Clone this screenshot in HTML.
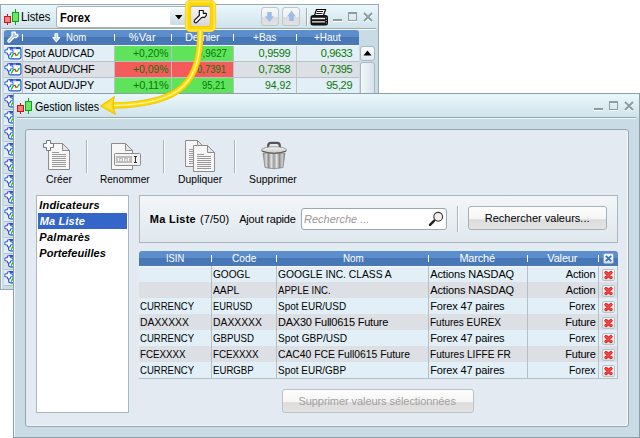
<!DOCTYPE html>
<html><head><meta charset="utf-8">
<style>
*{box-sizing:border-box;margin:0;padding:0}
html,body{width:640px;height:438px;overflow:hidden;background:#fff;font-family:"Liberation Sans",sans-serif;font-size:11px;color:#000}
.a{position:absolute}
.t{position:absolute;white-space:nowrap;line-height:13px}
svg{overflow:visible}
</style></head><body>

<div class="a" style="left:0px;top:4px;width:379px;height:286px;background:#c9dbe5;border:1px solid #9aa9b1;box-shadow:inset 1px 1px 0 #eef6f9"></div>
<div class="a" style="left:1px;top:5px;width:377px;height:24px;background:linear-gradient(#e9f8fc,#d0e1ea)"></div>
<div class="a" style="left:2px;top:28px;width:374px;height:1px;background:#9dabb2"></div>
<div class="a" style="left:2px;top:29px;width:374px;height:1px;background:#f4fafc"></div>
<svg class="a" style="left:4px;top:9px;" width="16" height="16" viewBox="0 0 16 16"><rect x="0.5" y="7.5" width="6" height="6" fill="#f58080" stroke="#c81414"/><line x1="3.5" y1="5" x2="3.5" y2="7" stroke="#c81414"/><line x1="3.5" y1="14" x2="3.5" y2="16" stroke="#c81414"/><rect x="8.5" y="3.5" width="6" height="9" fill="#68e868" stroke="#12a01a"/><line x1="11.5" y1="0" x2="11.5" y2="3" stroke="#12a01a"/><line x1="11.5" y1="13" x2="11.5" y2="16" stroke="#12a01a"/></svg>
<div class="t" style="left:21.00px;top:11px;font-size:12px;transform:scaleX(0.9355);transform-origin:0 0;">Listes</div>
<div class="a" style="left:56px;top:6px;width:131px;height:22px;background:#fff;border:1px solid #a5b3ba;border-radius:3px"></div>
<div class="a" style="left:170px;top:9px;width:16px;height:16px;background:linear-gradient(#f0f7fa,#cadbe4);border-radius:2px"></div>
<svg class="a" style="left:175px;top:15px;" width="8" height="5" viewBox="0 0 8 5"><path d="M0 0 H7.5 L3.75 4.5 Z" fill="#000"/></svg>
<div class="t" style="left:59.50px;top:12px;font-size:12px;transform:scaleX(0.9242);transform-origin:0 0;font-weight:bold">Forex</div>
<div class="a" style="left:190px;top:6px;width:21px;height:21px;background:linear-gradient(#f6f6f6,#d6d6d6);border:1px solid #9db3c6;border-radius:2px"></div>
<svg class="a" style="left:191px;top:6px;" width="20" height="20" viewBox="0 0 20 20"><path d="M8.3 4.5 H12.3 V7.3 H15.3 L15.4 9.3 L13.6 11.3 H10.8 L5.8 16.3 Q4.6 17.3 3.6 16.3 Q2.7 15.2 3.6 14.2 L8.3 9.5 Z" fill="#fff" stroke="#111" stroke-width="1.15" stroke-linejoin="round"/></svg>
<div class="a" style="left:261px;top:7px;width:18px;height:19px;background:linear-gradient(#f7f7f7 0,#efefef 55%,#dcdcdc 56%,#e2e2e2 100%);border:1px solid #bcc6cc;border-radius:3px"></div>
<svg class="a" style="left:264px;top:11px;" width="11" height="12" viewBox="0 0 11 12"><path d="M5.5 11 L10 5.3 H7.8 V1 H3.2 V5.3 H1 Z" fill="#9dbce9"/></svg>
<div class="a" style="left:282px;top:7px;width:18px;height:19px;background:linear-gradient(#f7f7f7 0,#efefef 55%,#dcdcdc 56%,#e2e2e2 100%);border:1px solid #bcc6cc;border-radius:3px"></div>
<svg class="a" style="left:286px;top:10px;" width="11" height="12" viewBox="0 0 11 12"><path d="M5.5 0.8 L10 6.5 H7.8 V11 H3.2 V6.5 H1 Z" fill="#9dbce9"/></svg>
<div class="a" style="left:306px;top:8px;width:1px;height:18px;background:#9eabb2;box-shadow:1px 0 0 #fff"></div>
<svg class="a" style="left:310px;top:8px;" width="19" height="18" viewBox="0 0 19 18"><path d="M6.5 1.5 H15.5 L13.5 7.5 H4.5 Z" fill="#fff" stroke="#000" stroke-width="1.2"/><path d="M7 3.5 H13 M6.3 5.5 H12.5" stroke="#000" stroke-width="0.9"/><rect x="0.5" y="7" width="17.5" height="10.5" rx="2.5" fill="#111"/><path d="M2 10.5 H15 M2 13.8 H15" stroke="#eee" stroke-width="1.3"/><path d="M16.3 9.5 V10.5 M16.3 12 V13 M16.3 14.5 V15.5" stroke="#ccc" stroke-width="1"/></svg>
<div class="a" style="left:333px;top:19px;width:9px;height:2px;background:#8d9ca4;box-shadow:0 1px 0 #fff"></div>
<div class="a" style="left:348px;top:12px;width:9px;height:9px;border:1px solid #8d9ca4;border-top-width:2px;box-shadow:0 1px 0 #fff"></div>
<svg class="a" style="left:363px;top:12px;" width="10" height="10" viewBox="0 0 10 10"><path d="M1 1 L9 9 M9 1 L1 9" stroke="#fff" stroke-width="2" transform="translate(0,1)"/><path d="M1 1 L9 9 M9 1 L1 9" stroke="#8d9ca4" stroke-width="2"/></svg>
<div class="a" style="left:4px;top:30px;width:355px;height:15px;border-radius:3px 3px 0 0;background:linear-gradient(#5e8fcd 0,#5a8ccb 50%,#4676b5 50%,#4a79b6 100%)"></div>
<div class="a" style="left:22px;top:34px;width:1px;height:7px;background:#fff"></div>
<div class="a" style="left:114px;top:34px;width:1px;height:7px;background:#fff"></div>
<div class="a" style="left:171px;top:34px;width:1px;height:7px;background:#fff"></div>
<div class="a" style="left:233px;top:34px;width:1px;height:7px;background:#fff"></div>
<div class="a" style="left:296px;top:34px;width:1px;height:7px;background:#fff"></div>
<svg class="a" style="left:4px;top:29px;" width="16" height="16" viewBox="0 0 16 16"><g transform="translate(1.2,-0.6) scale(0.82)"><path d="M8.3 4.5 H12.3 V7.3 H15.3 L15.4 9.3 L13.6 11.3 H10.8 L5.8 16.3 Q4.6 17.3 3.6 16.3 Q2.7 15.2 3.6 14.2 L8.3 9.5 Z" fill="#a9c2e6" stroke="#fff" stroke-width="1.5" stroke-linejoin="round"/></g></svg>
<svg class="a" style="left:52px;top:33px;" width="9" height="10" viewBox="0 0 9 10"><path d="M3 0.7 H5.6 V4.6 H7.8 L4.3 8.6 L0.8 4.6 H3 Z" fill="#c3d6ee" stroke="#fff" stroke-width="1.1" stroke-linejoin="round"/></svg>
<div class="t" style="left:66.00px;top:31px;font-size:11px;transform:scaleX(0.8696);transform-origin:0 0;color:#fff">Nom</div>
<div class="t" style="left:128.80px;top:31px;font-size:11px;letter-spacing:0.233px;color:#fff">%Var</div>
<div class="t" style="left:185.00px;top:31px;font-size:11px;letter-spacing:-0.250px;color:#fff">Dernier</div>
<div class="t" style="left:253.00px;top:31px;font-size:11px;transform:scaleX(0.9231);transform-origin:0 0;color:#fff">+Bas</div>
<div class="t" style="left:314.00px;top:31px;font-size:11px;transform:scaleX(0.9000);transform-origin:0 0;color:#fff">+Haut</div>
<div class="a" style="left:4px;top:45px;width:355px;height:1px;background:#f4f8fb"></div>
<div class="a" style="left:4px;top:46px;width:355px;height:15px;background:#e2eff7"></div>
<div class="a" style="left:4px;top:61px;width:355px;height:1px;background:#b9c0c8"></div>
<div class="a" style="left:22px;top:46px;width:1px;height:15px;background:#b9c0c8"></div>
<div class="a" style="left:114px;top:46px;width:1px;height:15px;background:#b9c0c8"></div>
<div class="a" style="left:171px;top:46px;width:1px;height:15px;background:#b9c0c8"></div>
<div class="a" style="left:233px;top:46px;width:1px;height:15px;background:#b9c0c8"></div>
<div class="a" style="left:296px;top:46px;width:1px;height:15px;background:#b9c0c8"></div>
<svg class="a" style="left:4px;top:46px;" width="18" height="14" viewBox="0 0 18 14"><rect x="4.6" y="1.6" width="12.3" height="11.3" rx="1.8" fill="#fff" stroke="#2456d6" stroke-width="1.2"/><path d="M5.2 2.2 H16.5" stroke="#2456d6" stroke-width="2"/><path d="M9 2.2 H12" stroke="#9fb8ee" stroke-width="1"/><path d="M7 11.6 L10.3 6.6" fill="none" stroke="#18c018" stroke-width="1.3"/><path d="M10.6 6.8 L12.4 9.8" fill="none" stroke="#e81818" stroke-width="1.3"/><path d="M12.6 9.8 L15.6 5.8" fill="none" stroke="#18c018" stroke-width="1.3"/><path d="M3.4 1.9 H6.4 V3.9 H8.9 V6.9 H6.4 V8.9 H3.4 V6.9 H0.9 V3.9 H3.4 Z" fill="#fff" stroke="#2456d6" stroke-width="0.95" stroke-linejoin="round"/></svg>
<div class="a" style="left:115px;top:46px;width:56px;height:15px;background:#5ee35b"></div>
<div class="a" style="left:172px;top:46px;width:61px;height:15px;background:#5ee35b"></div>
<div class="t" style="left:24.00px;top:47px;font-size:11px;transform:scaleX(0.9427);transform-origin:0 0;">Spot AUD/CAD</div>
<div class="t" style="left:133.10px;top:47px;font-size:11px;transform:scaleX(0.9421);transform-origin:0 0;color:#087808">+0,20%</div>
<div class="t" style="left:196.60px;top:47px;font-size:11px;transform:scaleX(0.8941);transform-origin:0 0;color:#087808">0,9627</div>
<div class="t" style="left:258.60px;top:47px;font-size:11px;letter-spacing:-0.320px;color:#087808">0,9599</div>
<div class="t" style="left:320.70px;top:47px;font-size:11px;letter-spacing:-0.340px;color:#087808">0,9633</div>
<div class="a" style="left:4px;top:62px;width:355px;height:15px;background:#dcdfe4"></div>
<div class="a" style="left:4px;top:77px;width:355px;height:1px;background:#b9c0c8"></div>
<div class="a" style="left:22px;top:62px;width:1px;height:15px;background:#b9c0c8"></div>
<div class="a" style="left:114px;top:62px;width:1px;height:15px;background:#b9c0c8"></div>
<div class="a" style="left:171px;top:62px;width:1px;height:15px;background:#b9c0c8"></div>
<div class="a" style="left:233px;top:62px;width:1px;height:15px;background:#b9c0c8"></div>
<div class="a" style="left:296px;top:62px;width:1px;height:15px;background:#b9c0c8"></div>
<svg class="a" style="left:4px;top:62px;" width="18" height="14" viewBox="0 0 18 14"><rect x="4.6" y="1.6" width="12.3" height="11.3" rx="1.8" fill="#fff" stroke="#2456d6" stroke-width="1.2"/><path d="M5.2 2.2 H16.5" stroke="#2456d6" stroke-width="2"/><path d="M9 2.2 H12" stroke="#9fb8ee" stroke-width="1"/><path d="M7 11.6 L10.3 6.6" fill="none" stroke="#18c018" stroke-width="1.3"/><path d="M10.6 6.8 L12.4 9.8" fill="none" stroke="#e81818" stroke-width="1.3"/><path d="M12.6 9.8 L15.6 5.8" fill="none" stroke="#18c018" stroke-width="1.3"/><path d="M3.4 1.9 H6.4 V3.9 H8.9 V6.9 H6.4 V8.9 H3.4 V6.9 H0.9 V3.9 H3.4 Z" fill="#fff" stroke="#2456d6" stroke-width="0.95" stroke-linejoin="round"/></svg>
<div class="a" style="left:115px;top:62px;width:56px;height:15px;background:#f65b5b"></div>
<div class="a" style="left:172px;top:62px;width:61px;height:15px;background:#f65b5b"></div>
<div class="t" style="left:24.00px;top:63px;font-size:11px;letter-spacing:-0.300px;">Spot AUD/CHF</div>
<div class="t" style="left:133.00px;top:63px;font-size:11px;transform:scaleX(0.9447);transform-origin:0 0;color:#087808">+0,09%</div>
<div class="t" style="left:196.60px;top:63px;font-size:11px;transform:scaleX(0.8588);transform-origin:0 0;color:#087808">0,7391</div>
<div class="t" style="left:258.60px;top:63px;font-size:11px;letter-spacing:-0.320px;color:#087808">0,7358</div>
<div class="t" style="left:320.60px;top:63px;font-size:11px;letter-spacing:-0.320px;color:#087808">0,7395</div>
<div class="a" style="left:4px;top:78px;width:355px;height:15px;background:#e2eff7"></div>
<div class="a" style="left:4px;top:93px;width:355px;height:1px;background:#b9c0c8"></div>
<div class="a" style="left:22px;top:78px;width:1px;height:15px;background:#b9c0c8"></div>
<div class="a" style="left:114px;top:78px;width:1px;height:15px;background:#b9c0c8"></div>
<div class="a" style="left:171px;top:78px;width:1px;height:15px;background:#b9c0c8"></div>
<div class="a" style="left:233px;top:78px;width:1px;height:15px;background:#b9c0c8"></div>
<div class="a" style="left:296px;top:78px;width:1px;height:15px;background:#b9c0c8"></div>
<svg class="a" style="left:4px;top:78px;" width="18" height="14" viewBox="0 0 18 14"><rect x="4.6" y="1.6" width="12.3" height="11.3" rx="1.8" fill="#fff" stroke="#2456d6" stroke-width="1.2"/><path d="M5.2 2.2 H16.5" stroke="#2456d6" stroke-width="2"/><path d="M9 2.2 H12" stroke="#9fb8ee" stroke-width="1"/><path d="M7 11.6 L10.3 6.6" fill="none" stroke="#18c018" stroke-width="1.3"/><path d="M10.6 6.8 L12.4 9.8" fill="none" stroke="#e81818" stroke-width="1.3"/><path d="M12.6 9.8 L15.6 5.8" fill="none" stroke="#18c018" stroke-width="1.3"/><path d="M3.4 1.9 H6.4 V3.9 H8.9 V6.9 H6.4 V8.9 H3.4 V6.9 H0.9 V3.9 H3.4 Z" fill="#fff" stroke="#2456d6" stroke-width="0.95" stroke-linejoin="round"/></svg>
<div class="a" style="left:115px;top:78px;width:56px;height:15px;background:#5ee35b"></div>
<div class="a" style="left:172px;top:78px;width:61px;height:15px;background:#5ee35b"></div>
<div class="t" style="left:24.00px;top:79px;font-size:11px;letter-spacing:-0.118px;">Spot AUD/JPY</div>
<div class="t" style="left:133.00px;top:79px;font-size:11px;letter-spacing:-0.220px;color:#087808">+0,11%</div>
<div class="t" style="left:202.00px;top:79px;font-size:11px;transform:scaleX(0.8571);transform-origin:0 0;color:#087808">95,21</div>
<div class="t" style="left:264.50px;top:79px;font-size:11px;transform:scaleX(0.9464);transform-origin:0 0;color:#087808">94,92</div>
<div class="t" style="left:326.30px;top:79px;font-size:11px;letter-spacing:-0.325px;color:#087808">95,29</div>
<div class="a" style="left:4px;top:94px;width:355px;height:15px;background:#dcdfe4"></div>
<div class="a" style="left:4px;top:109px;width:355px;height:1px;background:#b9c0c8"></div>
<div class="a" style="left:22px;top:94px;width:1px;height:15px;background:#b9c0c8"></div>
<div class="a" style="left:114px;top:94px;width:1px;height:15px;background:#b9c0c8"></div>
<div class="a" style="left:171px;top:94px;width:1px;height:15px;background:#b9c0c8"></div>
<div class="a" style="left:233px;top:94px;width:1px;height:15px;background:#b9c0c8"></div>
<div class="a" style="left:296px;top:94px;width:1px;height:15px;background:#b9c0c8"></div>
<svg class="a" style="left:4px;top:94px;" width="18" height="14" viewBox="0 0 18 14"><rect x="4.6" y="1.6" width="12.3" height="11.3" rx="1.8" fill="#fff" stroke="#2456d6" stroke-width="1.2"/><path d="M5.2 2.2 H16.5" stroke="#2456d6" stroke-width="2"/><path d="M9 2.2 H12" stroke="#9fb8ee" stroke-width="1"/><path d="M7 11.6 L10.3 6.6" fill="none" stroke="#18c018" stroke-width="1.3"/><path d="M10.6 6.8 L12.4 9.8" fill="none" stroke="#e81818" stroke-width="1.3"/><path d="M12.6 9.8 L15.6 5.8" fill="none" stroke="#18c018" stroke-width="1.3"/><path d="M3.4 1.9 H6.4 V3.9 H8.9 V6.9 H6.4 V8.9 H3.4 V6.9 H0.9 V3.9 H3.4 Z" fill="#fff" stroke="#2456d6" stroke-width="0.95" stroke-linejoin="round"/></svg>
<div class="a" style="left:4px;top:110px;width:355px;height:15px;background:#e2eff7"></div>
<div class="a" style="left:4px;top:125px;width:355px;height:1px;background:#b9c0c8"></div>
<div class="a" style="left:22px;top:110px;width:1px;height:15px;background:#b9c0c8"></div>
<div class="a" style="left:114px;top:110px;width:1px;height:15px;background:#b9c0c8"></div>
<div class="a" style="left:171px;top:110px;width:1px;height:15px;background:#b9c0c8"></div>
<div class="a" style="left:233px;top:110px;width:1px;height:15px;background:#b9c0c8"></div>
<div class="a" style="left:296px;top:110px;width:1px;height:15px;background:#b9c0c8"></div>
<svg class="a" style="left:4px;top:110px;" width="18" height="14" viewBox="0 0 18 14"><rect x="4.6" y="1.6" width="12.3" height="11.3" rx="1.8" fill="#fff" stroke="#2456d6" stroke-width="1.2"/><path d="M5.2 2.2 H16.5" stroke="#2456d6" stroke-width="2"/><path d="M9 2.2 H12" stroke="#9fb8ee" stroke-width="1"/><path d="M7 11.6 L10.3 6.6" fill="none" stroke="#18c018" stroke-width="1.3"/><path d="M10.6 6.8 L12.4 9.8" fill="none" stroke="#e81818" stroke-width="1.3"/><path d="M12.6 9.8 L15.6 5.8" fill="none" stroke="#18c018" stroke-width="1.3"/><path d="M3.4 1.9 H6.4 V3.9 H8.9 V6.9 H6.4 V8.9 H3.4 V6.9 H0.9 V3.9 H3.4 Z" fill="#fff" stroke="#2456d6" stroke-width="0.95" stroke-linejoin="round"/></svg>
<div class="a" style="left:4px;top:126px;width:355px;height:15px;background:#dcdfe4"></div>
<div class="a" style="left:4px;top:141px;width:355px;height:1px;background:#b9c0c8"></div>
<div class="a" style="left:22px;top:126px;width:1px;height:15px;background:#b9c0c8"></div>
<div class="a" style="left:114px;top:126px;width:1px;height:15px;background:#b9c0c8"></div>
<div class="a" style="left:171px;top:126px;width:1px;height:15px;background:#b9c0c8"></div>
<div class="a" style="left:233px;top:126px;width:1px;height:15px;background:#b9c0c8"></div>
<div class="a" style="left:296px;top:126px;width:1px;height:15px;background:#b9c0c8"></div>
<svg class="a" style="left:4px;top:126px;" width="18" height="14" viewBox="0 0 18 14"><rect x="4.6" y="1.6" width="12.3" height="11.3" rx="1.8" fill="#fff" stroke="#2456d6" stroke-width="1.2"/><path d="M5.2 2.2 H16.5" stroke="#2456d6" stroke-width="2"/><path d="M9 2.2 H12" stroke="#9fb8ee" stroke-width="1"/><path d="M7 11.6 L10.3 6.6" fill="none" stroke="#18c018" stroke-width="1.3"/><path d="M10.6 6.8 L12.4 9.8" fill="none" stroke="#e81818" stroke-width="1.3"/><path d="M12.6 9.8 L15.6 5.8" fill="none" stroke="#18c018" stroke-width="1.3"/><path d="M3.4 1.9 H6.4 V3.9 H8.9 V6.9 H6.4 V8.9 H3.4 V6.9 H0.9 V3.9 H3.4 Z" fill="#fff" stroke="#2456d6" stroke-width="0.95" stroke-linejoin="round"/></svg>
<div class="a" style="left:4px;top:142px;width:355px;height:15px;background:#e2eff7"></div>
<div class="a" style="left:4px;top:157px;width:355px;height:1px;background:#b9c0c8"></div>
<div class="a" style="left:22px;top:142px;width:1px;height:15px;background:#b9c0c8"></div>
<div class="a" style="left:114px;top:142px;width:1px;height:15px;background:#b9c0c8"></div>
<div class="a" style="left:171px;top:142px;width:1px;height:15px;background:#b9c0c8"></div>
<div class="a" style="left:233px;top:142px;width:1px;height:15px;background:#b9c0c8"></div>
<div class="a" style="left:296px;top:142px;width:1px;height:15px;background:#b9c0c8"></div>
<svg class="a" style="left:4px;top:142px;" width="18" height="14" viewBox="0 0 18 14"><rect x="4.6" y="1.6" width="12.3" height="11.3" rx="1.8" fill="#fff" stroke="#2456d6" stroke-width="1.2"/><path d="M5.2 2.2 H16.5" stroke="#2456d6" stroke-width="2"/><path d="M9 2.2 H12" stroke="#9fb8ee" stroke-width="1"/><path d="M7 11.6 L10.3 6.6" fill="none" stroke="#18c018" stroke-width="1.3"/><path d="M10.6 6.8 L12.4 9.8" fill="none" stroke="#e81818" stroke-width="1.3"/><path d="M12.6 9.8 L15.6 5.8" fill="none" stroke="#18c018" stroke-width="1.3"/><path d="M3.4 1.9 H6.4 V3.9 H8.9 V6.9 H6.4 V8.9 H3.4 V6.9 H0.9 V3.9 H3.4 Z" fill="#fff" stroke="#2456d6" stroke-width="0.95" stroke-linejoin="round"/></svg>
<div class="a" style="left:4px;top:158px;width:355px;height:15px;background:#dcdfe4"></div>
<div class="a" style="left:4px;top:173px;width:355px;height:1px;background:#b9c0c8"></div>
<div class="a" style="left:22px;top:158px;width:1px;height:15px;background:#b9c0c8"></div>
<div class="a" style="left:114px;top:158px;width:1px;height:15px;background:#b9c0c8"></div>
<div class="a" style="left:171px;top:158px;width:1px;height:15px;background:#b9c0c8"></div>
<div class="a" style="left:233px;top:158px;width:1px;height:15px;background:#b9c0c8"></div>
<div class="a" style="left:296px;top:158px;width:1px;height:15px;background:#b9c0c8"></div>
<svg class="a" style="left:4px;top:158px;" width="18" height="14" viewBox="0 0 18 14"><rect x="4.6" y="1.6" width="12.3" height="11.3" rx="1.8" fill="#fff" stroke="#2456d6" stroke-width="1.2"/><path d="M5.2 2.2 H16.5" stroke="#2456d6" stroke-width="2"/><path d="M9 2.2 H12" stroke="#9fb8ee" stroke-width="1"/><path d="M7 11.6 L10.3 6.6" fill="none" stroke="#18c018" stroke-width="1.3"/><path d="M10.6 6.8 L12.4 9.8" fill="none" stroke="#e81818" stroke-width="1.3"/><path d="M12.6 9.8 L15.6 5.8" fill="none" stroke="#18c018" stroke-width="1.3"/><path d="M3.4 1.9 H6.4 V3.9 H8.9 V6.9 H6.4 V8.9 H3.4 V6.9 H0.9 V3.9 H3.4 Z" fill="#fff" stroke="#2456d6" stroke-width="0.95" stroke-linejoin="round"/></svg>
<div class="a" style="left:4px;top:174px;width:355px;height:15px;background:#e2eff7"></div>
<div class="a" style="left:4px;top:189px;width:355px;height:1px;background:#b9c0c8"></div>
<div class="a" style="left:22px;top:174px;width:1px;height:15px;background:#b9c0c8"></div>
<div class="a" style="left:114px;top:174px;width:1px;height:15px;background:#b9c0c8"></div>
<div class="a" style="left:171px;top:174px;width:1px;height:15px;background:#b9c0c8"></div>
<div class="a" style="left:233px;top:174px;width:1px;height:15px;background:#b9c0c8"></div>
<div class="a" style="left:296px;top:174px;width:1px;height:15px;background:#b9c0c8"></div>
<svg class="a" style="left:4px;top:174px;" width="18" height="14" viewBox="0 0 18 14"><rect x="4.6" y="1.6" width="12.3" height="11.3" rx="1.8" fill="#fff" stroke="#2456d6" stroke-width="1.2"/><path d="M5.2 2.2 H16.5" stroke="#2456d6" stroke-width="2"/><path d="M9 2.2 H12" stroke="#9fb8ee" stroke-width="1"/><path d="M7 11.6 L10.3 6.6" fill="none" stroke="#18c018" stroke-width="1.3"/><path d="M10.6 6.8 L12.4 9.8" fill="none" stroke="#e81818" stroke-width="1.3"/><path d="M12.6 9.8 L15.6 5.8" fill="none" stroke="#18c018" stroke-width="1.3"/><path d="M3.4 1.9 H6.4 V3.9 H8.9 V6.9 H6.4 V8.9 H3.4 V6.9 H0.9 V3.9 H3.4 Z" fill="#fff" stroke="#2456d6" stroke-width="0.95" stroke-linejoin="round"/></svg>
<div class="a" style="left:4px;top:190px;width:355px;height:15px;background:#dcdfe4"></div>
<div class="a" style="left:4px;top:205px;width:355px;height:1px;background:#b9c0c8"></div>
<div class="a" style="left:22px;top:190px;width:1px;height:15px;background:#b9c0c8"></div>
<div class="a" style="left:114px;top:190px;width:1px;height:15px;background:#b9c0c8"></div>
<div class="a" style="left:171px;top:190px;width:1px;height:15px;background:#b9c0c8"></div>
<div class="a" style="left:233px;top:190px;width:1px;height:15px;background:#b9c0c8"></div>
<div class="a" style="left:296px;top:190px;width:1px;height:15px;background:#b9c0c8"></div>
<svg class="a" style="left:4px;top:190px;" width="18" height="14" viewBox="0 0 18 14"><rect x="4.6" y="1.6" width="12.3" height="11.3" rx="1.8" fill="#fff" stroke="#2456d6" stroke-width="1.2"/><path d="M5.2 2.2 H16.5" stroke="#2456d6" stroke-width="2"/><path d="M9 2.2 H12" stroke="#9fb8ee" stroke-width="1"/><path d="M7 11.6 L10.3 6.6" fill="none" stroke="#18c018" stroke-width="1.3"/><path d="M10.6 6.8 L12.4 9.8" fill="none" stroke="#e81818" stroke-width="1.3"/><path d="M12.6 9.8 L15.6 5.8" fill="none" stroke="#18c018" stroke-width="1.3"/><path d="M3.4 1.9 H6.4 V3.9 H8.9 V6.9 H6.4 V8.9 H3.4 V6.9 H0.9 V3.9 H3.4 Z" fill="#fff" stroke="#2456d6" stroke-width="0.95" stroke-linejoin="round"/></svg>
<div class="a" style="left:4px;top:206px;width:355px;height:15px;background:#e2eff7"></div>
<div class="a" style="left:4px;top:221px;width:355px;height:1px;background:#b9c0c8"></div>
<div class="a" style="left:22px;top:206px;width:1px;height:15px;background:#b9c0c8"></div>
<div class="a" style="left:114px;top:206px;width:1px;height:15px;background:#b9c0c8"></div>
<div class="a" style="left:171px;top:206px;width:1px;height:15px;background:#b9c0c8"></div>
<div class="a" style="left:233px;top:206px;width:1px;height:15px;background:#b9c0c8"></div>
<div class="a" style="left:296px;top:206px;width:1px;height:15px;background:#b9c0c8"></div>
<svg class="a" style="left:4px;top:206px;" width="18" height="14" viewBox="0 0 18 14"><rect x="4.6" y="1.6" width="12.3" height="11.3" rx="1.8" fill="#fff" stroke="#2456d6" stroke-width="1.2"/><path d="M5.2 2.2 H16.5" stroke="#2456d6" stroke-width="2"/><path d="M9 2.2 H12" stroke="#9fb8ee" stroke-width="1"/><path d="M7 11.6 L10.3 6.6" fill="none" stroke="#18c018" stroke-width="1.3"/><path d="M10.6 6.8 L12.4 9.8" fill="none" stroke="#e81818" stroke-width="1.3"/><path d="M12.6 9.8 L15.6 5.8" fill="none" stroke="#18c018" stroke-width="1.3"/><path d="M3.4 1.9 H6.4 V3.9 H8.9 V6.9 H6.4 V8.9 H3.4 V6.9 H0.9 V3.9 H3.4 Z" fill="#fff" stroke="#2456d6" stroke-width="0.95" stroke-linejoin="round"/></svg>
<div class="a" style="left:4px;top:222px;width:355px;height:15px;background:#dcdfe4"></div>
<div class="a" style="left:4px;top:237px;width:355px;height:1px;background:#b9c0c8"></div>
<div class="a" style="left:22px;top:222px;width:1px;height:15px;background:#b9c0c8"></div>
<div class="a" style="left:114px;top:222px;width:1px;height:15px;background:#b9c0c8"></div>
<div class="a" style="left:171px;top:222px;width:1px;height:15px;background:#b9c0c8"></div>
<div class="a" style="left:233px;top:222px;width:1px;height:15px;background:#b9c0c8"></div>
<div class="a" style="left:296px;top:222px;width:1px;height:15px;background:#b9c0c8"></div>
<svg class="a" style="left:4px;top:222px;" width="18" height="14" viewBox="0 0 18 14"><rect x="4.6" y="1.6" width="12.3" height="11.3" rx="1.8" fill="#fff" stroke="#2456d6" stroke-width="1.2"/><path d="M5.2 2.2 H16.5" stroke="#2456d6" stroke-width="2"/><path d="M9 2.2 H12" stroke="#9fb8ee" stroke-width="1"/><path d="M7 11.6 L10.3 6.6" fill="none" stroke="#18c018" stroke-width="1.3"/><path d="M10.6 6.8 L12.4 9.8" fill="none" stroke="#e81818" stroke-width="1.3"/><path d="M12.6 9.8 L15.6 5.8" fill="none" stroke="#18c018" stroke-width="1.3"/><path d="M3.4 1.9 H6.4 V3.9 H8.9 V6.9 H6.4 V8.9 H3.4 V6.9 H0.9 V3.9 H3.4 Z" fill="#fff" stroke="#2456d6" stroke-width="0.95" stroke-linejoin="round"/></svg>
<div class="a" style="left:4px;top:238px;width:355px;height:15px;background:#e2eff7"></div>
<div class="a" style="left:4px;top:253px;width:355px;height:1px;background:#b9c0c8"></div>
<div class="a" style="left:22px;top:238px;width:1px;height:15px;background:#b9c0c8"></div>
<div class="a" style="left:114px;top:238px;width:1px;height:15px;background:#b9c0c8"></div>
<div class="a" style="left:171px;top:238px;width:1px;height:15px;background:#b9c0c8"></div>
<div class="a" style="left:233px;top:238px;width:1px;height:15px;background:#b9c0c8"></div>
<div class="a" style="left:296px;top:238px;width:1px;height:15px;background:#b9c0c8"></div>
<svg class="a" style="left:4px;top:238px;" width="18" height="14" viewBox="0 0 18 14"><rect x="4.6" y="1.6" width="12.3" height="11.3" rx="1.8" fill="#fff" stroke="#2456d6" stroke-width="1.2"/><path d="M5.2 2.2 H16.5" stroke="#2456d6" stroke-width="2"/><path d="M9 2.2 H12" stroke="#9fb8ee" stroke-width="1"/><path d="M7 11.6 L10.3 6.6" fill="none" stroke="#18c018" stroke-width="1.3"/><path d="M10.6 6.8 L12.4 9.8" fill="none" stroke="#e81818" stroke-width="1.3"/><path d="M12.6 9.8 L15.6 5.8" fill="none" stroke="#18c018" stroke-width="1.3"/><path d="M3.4 1.9 H6.4 V3.9 H8.9 V6.9 H6.4 V8.9 H3.4 V6.9 H0.9 V3.9 H3.4 Z" fill="#fff" stroke="#2456d6" stroke-width="0.95" stroke-linejoin="round"/></svg>
<div class="a" style="left:4px;top:254px;width:355px;height:15px;background:#dcdfe4"></div>
<div class="a" style="left:4px;top:269px;width:355px;height:1px;background:#b9c0c8"></div>
<div class="a" style="left:22px;top:254px;width:1px;height:15px;background:#b9c0c8"></div>
<div class="a" style="left:114px;top:254px;width:1px;height:15px;background:#b9c0c8"></div>
<div class="a" style="left:171px;top:254px;width:1px;height:15px;background:#b9c0c8"></div>
<div class="a" style="left:233px;top:254px;width:1px;height:15px;background:#b9c0c8"></div>
<div class="a" style="left:296px;top:254px;width:1px;height:15px;background:#b9c0c8"></div>
<svg class="a" style="left:4px;top:254px;" width="18" height="14" viewBox="0 0 18 14"><rect x="4.6" y="1.6" width="12.3" height="11.3" rx="1.8" fill="#fff" stroke="#2456d6" stroke-width="1.2"/><path d="M5.2 2.2 H16.5" stroke="#2456d6" stroke-width="2"/><path d="M9 2.2 H12" stroke="#9fb8ee" stroke-width="1"/><path d="M7 11.6 L10.3 6.6" fill="none" stroke="#18c018" stroke-width="1.3"/><path d="M10.6 6.8 L12.4 9.8" fill="none" stroke="#e81818" stroke-width="1.3"/><path d="M12.6 9.8 L15.6 5.8" fill="none" stroke="#18c018" stroke-width="1.3"/><path d="M3.4 1.9 H6.4 V3.9 H8.9 V6.9 H6.4 V8.9 H3.4 V6.9 H0.9 V3.9 H3.4 Z" fill="#fff" stroke="#2456d6" stroke-width="0.95" stroke-linejoin="round"/></svg>
<div class="a" style="left:4px;top:270px;width:355px;height:15px;background:#e2eff7"></div>
<div class="a" style="left:4px;top:285px;width:355px;height:1px;background:#b9c0c8"></div>
<div class="a" style="left:22px;top:270px;width:1px;height:15px;background:#b9c0c8"></div>
<div class="a" style="left:114px;top:270px;width:1px;height:15px;background:#b9c0c8"></div>
<div class="a" style="left:171px;top:270px;width:1px;height:15px;background:#b9c0c8"></div>
<div class="a" style="left:233px;top:270px;width:1px;height:15px;background:#b9c0c8"></div>
<div class="a" style="left:296px;top:270px;width:1px;height:15px;background:#b9c0c8"></div>
<svg class="a" style="left:4px;top:270px;" width="18" height="14" viewBox="0 0 18 14"><rect x="4.6" y="1.6" width="12.3" height="11.3" rx="1.8" fill="#fff" stroke="#2456d6" stroke-width="1.2"/><path d="M5.2 2.2 H16.5" stroke="#2456d6" stroke-width="2"/><path d="M9 2.2 H12" stroke="#9fb8ee" stroke-width="1"/><path d="M7 11.6 L10.3 6.6" fill="none" stroke="#18c018" stroke-width="1.3"/><path d="M10.6 6.8 L12.4 9.8" fill="none" stroke="#e81818" stroke-width="1.3"/><path d="M12.6 9.8 L15.6 5.8" fill="none" stroke="#18c018" stroke-width="1.3"/><path d="M3.4 1.9 H6.4 V3.9 H8.9 V6.9 H6.4 V8.9 H3.4 V6.9 H0.9 V3.9 H3.4 Z" fill="#fff" stroke="#2456d6" stroke-width="0.95" stroke-linejoin="round"/></svg>
<div class="a" style="left:360px;top:46px;width:15px;height:15px;background:linear-gradient(#fdfefe,#dfe9ee);border:1px solid #a9b7bf;border-radius:3px"></div>
<svg class="a" style="left:363px;top:50px;" width="9" height="6" viewBox="0 0 9 6"><path d="M0.5 5.5 L4.5 0.5 L8.5 5.5 Z" fill="#000"/></svg>
<div class="a" style="left:360px;top:62px;width:15px;height:228px;background:linear-gradient(90deg,#f3f8fa,#d6e3ea);border:1px solid #a9b7bf;border-radius:3px"></div>
<div class="a" style="left:13px;top:93px;width:627px;height:345px;background:#c9dce6;border:1px solid #8e9ea6;box-shadow:inset 1px 1px 0 #eef6f9"></div>
<div class="a" style="left:14px;top:94px;width:625px;height:23px;background:linear-gradient(#e9f8fc,#d0e2ea)"></div>
<div class="a" style="left:17px;top:117px;width:619px;height:1px;background:#95a4ab"></div>
<div class="a" style="left:17px;top:118px;width:619px;height:1px;background:#f2f9fb"></div>
<svg class="a" style="left:17px;top:98px;" width="16" height="16" viewBox="0 0 16 16"><rect x="0.5" y="7.5" width="6" height="6" fill="#f58080" stroke="#c81414"/><line x1="3.5" y1="5" x2="3.5" y2="7" stroke="#c81414"/><line x1="3.5" y1="14" x2="3.5" y2="16" stroke="#c81414"/><rect x="8.5" y="3.5" width="6" height="9" fill="#68e868" stroke="#12a01a"/><line x1="11.5" y1="0" x2="11.5" y2="3" stroke="#12a01a"/><line x1="11.5" y1="13" x2="11.5" y2="16" stroke="#12a01a"/></svg>
<div class="t" style="left:35.00px;top:101px;font-size:12px;transform:scaleX(0.8889);transform-origin:0 0;">Gestion listes</div>
<div class="a" style="left:594px;top:108px;width:9px;height:2px;background:#8d9ca4;box-shadow:0 1px 0 #fff"></div>
<div class="a" style="left:609px;top:101px;width:9px;height:9px;border:1px solid #8d9ca4;border-top-width:2px;box-shadow:0 1px 0 #fff"></div>
<svg class="a" style="left:624px;top:101px;" width="10" height="10" viewBox="0 0 10 10"><path d="M1 1 L9 9 M9 1 L1 9" stroke="#fff" stroke-width="2" transform="translate(0,1)"/><path d="M1 1 L9 9 M9 1 L1 9" stroke="#8d9ca4" stroke-width="2"/></svg>
<div class="a" style="left:25px;top:129px;width:604px;height:298px;background:#e3eaf1;border:1px solid #97a7af;border-radius:3px;box-shadow:inset -1px -1px 0 #f3f7fa"></div>
<div class="a" style="left:86px;top:140px;width:1px;height:33px;background:#a7b4bb;box-shadow:1px 0 0 #fff"></div>
<div class="a" style="left:163px;top:140px;width:1px;height:33px;background:#a7b4bb;box-shadow:1px 0 0 #fff"></div>
<div class="a" style="left:234px;top:140px;width:1px;height:33px;background:#a7b4bb;box-shadow:1px 0 0 #fff"></div>
<div class="t" style="left:45.60px;top:173px;font-size:11px;transform:scaleX(0.9393);transform-origin:0 0;">Créer</div>
<div class="t" style="left:100.40px;top:173px;font-size:11px;transform:scaleX(0.9127);transform-origin:0 0;">Renommer</div>
<div class="t" style="left:177.70px;top:173px;font-size:11px;transform:scaleX(0.9362);transform-origin:0 0;">Dupliquer</div>
<div class="t" style="left:248.90px;top:173px;font-size:11px;transform:scaleX(0.9412);transform-origin:0 0;">Supprimer</div>
<svg class="a" style="left:48px;top:143px;" width="22" height="27" viewBox="0 0 22 27"><path d="M0.5 0.5 H14.5 L21.5 7.5 V26.5 H0.5 Z" fill="#f7f7f7" stroke="#8c8c8c"/><path d="M14.5 0.5 V7.5 H21.5 Z" fill="#e6e6e6" stroke="#8c8c8c" stroke-linejoin="round"/><path d="M4 9.5 H11" stroke="#9a9a9a"/><path d="M4 11.5 H18" stroke="#9a9a9a"/><path d="M4 13.5 H18" stroke="#9a9a9a"/><path d="M4 15.5 H18" stroke="#9a9a9a"/><path d="M4 17.5 H18" stroke="#9a9a9a"/><path d="M4 19.5 H18" stroke="#9a9a9a"/><path d="M4 21.5 H18" stroke="#9a9a9a"/><path d="M4 23.5 H18" stroke="#9a9a9a"/></svg>
<svg class="a" style="left:43px;top:140px;" width="11" height="11" viewBox="0 0 11 11"><path d="M3.5 0.5 H7.5 V3.5 H10.5 V7.5 H7.5 V10.5 H3.5 V7.5 H0.5 V3.5 H3.5 Z" fill="#fff" stroke="#6d7a82"/></svg>
<svg class="a" style="left:111px;top:143px;" width="22" height="27" viewBox="0 0 22 27"><path d="M0.5 0.5 H14.5 L21.5 7.5 V26.5 H0.5 Z" fill="#f7f7f7" stroke="#8c8c8c"/><path d="M14.5 0.5 V7.5 H21.5 Z" fill="#e6e6e6" stroke="#8c8c8c" stroke-linejoin="round"/></svg>
<svg class="a" style="left:114px;top:153px;" width="27" height="13" viewBox="0 0 27 13"><rect x="0.5" y="0.5" width="26" height="12" rx="1" fill="#f2f2f2" stroke="#8c8c8c"/><rect x="2" y="3" width="16" height="7" fill="#bdbdbd"/><path d="M4.5 5 V8 M7 6 V8 M9.5 5 V8 M12 6 V8 M14.5 5 V8" stroke="#fff" stroke-width="1.2"/><path d="M20 3.5 H23 M21.5 3.5 V9.5 M20 9.5 H23" stroke="#333"/></svg>
<svg class="a" style="left:185px;top:140px;" width="20" height="27" viewBox="0 0 20 27"><path d="M0.5 0.5 H12.5 L19.5 7.5 V26.5 H0.5 Z" fill="#f3f5f6" stroke="#8c8c8c"/><path d="M12.5 0.5 V7.5 H19.5 Z" fill="#e6e6e6" stroke="#8c8c8c" stroke-linejoin="round"/><path d="M4 9.5 H10" stroke="#9a9a9a"/><path d="M4 11.5 H16" stroke="#9a9a9a"/><path d="M4 13.5 H16" stroke="#9a9a9a"/><path d="M4 15.5 H16" stroke="#9a9a9a"/><path d="M4 17.5 H16" stroke="#9a9a9a"/><path d="M4 19.5 H16" stroke="#9a9a9a"/><path d="M4 21.5 H16" stroke="#9a9a9a"/><path d="M4 23.5 H16" stroke="#9a9a9a"/></svg>
<svg class="a" style="left:193px;top:145px;" width="22" height="27" viewBox="0 0 22 27"><path d="M0.5 0.5 H14.5 L21.5 7.5 V26.5 H0.5 Z" fill="#f7f7f7" stroke="#8c8c8c"/><path d="M14.5 0.5 V7.5 H21.5 Z" fill="#e6e6e6" stroke="#8c8c8c" stroke-linejoin="round"/><path d="M4 9.5 H11" stroke="#9a9a9a"/><path d="M4 11.5 H18" stroke="#9a9a9a"/><path d="M4 13.5 H18" stroke="#9a9a9a"/><path d="M4 15.5 H18" stroke="#9a9a9a"/><path d="M4 17.5 H18" stroke="#9a9a9a"/><path d="M4 19.5 H18" stroke="#9a9a9a"/><path d="M4 21.5 H18" stroke="#9a9a9a"/><path d="M4 23.5 H18" stroke="#9a9a9a"/></svg>
<svg class="a" style="left:260px;top:141px;" width="28" height="29" viewBox="0 0 28 29"><defs><linearGradient id="bin" x1="0" y1="0" x2="1" y2="0"><stop offset="0" stop-color="#8a8a8a"/><stop offset="0.15" stop-color="#d8d8d8"/><stop offset="0.25" stop-color="#8f8f8f"/><stop offset="0.38" stop-color="#e2e2e2"/><stop offset="0.5" stop-color="#999"/><stop offset="0.62" stop-color="#e4e4e4"/><stop offset="0.75" stop-color="#8f8f8f"/><stop offset="0.87" stop-color="#d0d0d0"/><stop offset="1" stop-color="#7a7a7a"/></linearGradient><linearGradient id="lid" x1="0" y1="0" x2="0" y2="1"><stop offset="0" stop-color="#f6f6f6"/><stop offset="1" stop-color="#c4c4c4"/></linearGradient></defs><path d="M8.2 7 V4.5 Q8.2 1.8 11 1.8 H17 Q19.8 1.8 19.8 4.5 V7" fill="none" stroke="#555" stroke-width="2.2"/><path d="M3 12 L5 26.5 Q14 29 23 26.5 L25 12 Z" fill="url(#bin)" stroke="#8a8a8a" stroke-width="0.8"/><ellipse cx="14" cy="9" rx="12.6" ry="3.3" fill="url(#lid)" stroke="#8a8a8a" stroke-width="0.8"/><path d="M1.8 10 Q14 14.5 26.2 10" fill="none" stroke="#555" stroke-width="1"/></svg>
<div class="a" style="left:36px;top:195px;width:93px;height:218px;background:#fff;border:1px solid #a8b8c0"></div>
<div class="a" style="left:38px;top:213px;width:89px;height:16px;background:#3465c8"></div>
<div class="t" style="left:39.30px;top:199px;font-size:11px;letter-spacing:0.170px;font-weight:bold;font-style:italic">Indicateurs</div>
<div class="t" style="left:39.80px;top:215px;font-size:11px;letter-spacing:0.143px;font-weight:bold;font-style:italic;color:#fff">Ma Liste</div>
<div class="t" style="left:39.30px;top:231px;font-size:11px;letter-spacing:0.286px;font-weight:bold;font-style:italic">Palmarès</div>
<div class="t" style="left:39.30px;top:247px;font-size:11px;letter-spacing:0.042px;font-weight:bold;font-style:italic">Portefeuilles</div>
<div class="a" style="left:139px;top:195px;width:479px;height:48px;background:linear-gradient(#f2f6f9,#e0e8ee);border:1px solid #a9b7bf"></div>
<div class="t" style="left:149.70px;top:213px;font-size:11px;letter-spacing:0.286px;font-weight:bold">Ma Liste</div>
<div class="t" style="left:200.00px;top:213px;font-size:11px;letter-spacing:0.080px;">(7/50)</div>
<div class="t" style="left:239.20px;top:213px;font-size:11px;letter-spacing:-0.182px;">Ajout rapide</div>
<div class="a" style="left:301px;top:208px;width:146px;height:22px;background:#fff;border:1px solid #9aa9b1;border-radius:3px"></div>
<div class="t" style="left:304.00px;top:213px;font-size:11px;font-style:italic;color:#999">Recherche ...</div>
<svg class="a" style="left:428px;top:211px;" width="16" height="16" viewBox="0 0 16 16"><circle cx="10.2" cy="5.8" r="4.4" fill="#f0f0f0" stroke="#3a3a3a" stroke-width="1.1"/><path d="M2 13.8 L6 9.8" stroke="#222" stroke-width="2.4" stroke-linecap="round"/></svg>
<div class="a" style="left:457px;top:206px;width:1px;height:26px;background:#a7b4bb;box-shadow:1px 0 0 #fff"></div>
<div class="a" style="left:468px;top:206px;width:139px;height:24px;background:linear-gradient(#fdfdfd 0,#f5f5f5 56%,#dcdcdc 57%,#e4e4e4 100%);border:1px solid #a8b0b6;border-radius:3px"></div>
<div class="t" style="left:484.70px;top:212px;font-size:11px;letter-spacing:0.015px;">Rechercher valeurs...</div>
<div class="a" style="left:139px;top:251px;width:479px;height:15px;border-radius:3px 3px 0 0;background:linear-gradient(#5e8fcd 0,#5a8ccb 50%,#4676b5 50%,#4a79b6 100%)"></div>
<div class="a" style="left:211px;top:255px;width:1px;height:7px;background:#fff"></div>
<div class="a" style="left:276px;top:255px;width:1px;height:7px;background:#fff"></div>
<div class="a" style="left:428px;top:255px;width:1px;height:7px;background:#fff"></div>
<div class="a" style="left:527px;top:255px;width:1px;height:7px;background:#fff"></div>
<div class="a" style="left:598px;top:255px;width:1px;height:7px;background:#fff"></div>
<div class="t" style="left:165.50px;top:252px;font-size:11px;transform:scaleX(0.8524);transform-origin:0 0;color:#fff">ISIN</div>
<div class="t" style="left:232.00px;top:252px;font-size:11px;transform:scaleX(0.9231);transform-origin:0 0;color:#fff">Code</div>
<div class="t" style="left:342.50px;top:252px;font-size:11px;transform:scaleX(0.8913);transform-origin:0 0;color:#fff">Nom</div>
<div class="t" style="left:459.40px;top:252px;font-size:11px;letter-spacing:-0.200px;color:#fff">Marché</div>
<div class="t" style="left:547.30px;top:252px;font-size:11px;letter-spacing:-0.160px;color:#fff">Valeur</div>
<div class="a" style="left:603px;top:253px;width:11px;height:11px;background:linear-gradient(#fafcff,#d5e0ec);border:1px solid #8ea7c7;border-radius:2px"></div>
<svg class="a" style="left:605px;top:255px;" width="7" height="7" viewBox="0 0 7 7"><path d="M0.8 0.8 L6.2 6.2 M6.2 0.8 L0.8 6.2" stroke="#3a6fc0" stroke-width="1.8"/></svg>
<div class="a" style="left:139px;top:266px;width:479px;height:16px;background:#e2eff7"></div>
<div class="a" style="left:139px;top:266px;width:479px;height:1px;background:#f4f8fb"></div>
<div class="a" style="left:139px;top:282px;width:479px;height:1px;background:#b5bfc6"></div>
<div class="a" style="left:211px;top:266px;width:1px;height:16px;background:#b5bfc6"></div>
<div class="a" style="left:276px;top:266px;width:1px;height:16px;background:#b5bfc6"></div>
<div class="a" style="left:428px;top:266px;width:1px;height:16px;background:#b5bfc6"></div>
<div class="a" style="left:527px;top:266px;width:1px;height:16px;background:#b5bfc6"></div>
<div class="a" style="left:598px;top:266px;width:1px;height:16px;background:#b5bfc6"></div>
<div class="a" style="left:617px;top:266px;width:1px;height:16px;background:#b5bfc6"></div>
<div class="t" style="left:212.90px;top:268px;font-size:11px;transform:scaleX(0.9200);transform-origin:0 0;">GOOGL</div>
<div class="t" style="left:278.00px;top:268px;font-size:11px;transform:scaleX(0.9344);transform-origin:0 0;">GOOGLE INC. CLASS A</div>
<div class="t" style="left:430.20px;top:268px;font-size:11px;letter-spacing:-0.123px;">Actions NASDAQ</div>
<div class="t" style="left:565.80px;top:268px;font-size:11px;letter-spacing:-0.140px;">Action</div>
<div class="a" style="left:602px;top:269px;width:13px;height:12px;background:linear-gradient(#fdfdfd,#e4e4e4);border:1px solid #b9c1c7;border-radius:2px"></div>
<svg class="a" style="left:604px;top:271px;" width="9" height="8" viewBox="0 0 9 8"><path d="M2 1.6 L7 6.4 M7 1.6 L2 6.4" stroke="#c42020" stroke-width="3.4" stroke-linecap="round"/><path d="M2 1.6 L7 6.4 M7 1.6 L2 6.4" stroke="#f04040" stroke-width="2.4" stroke-linecap="round"/></svg>
<div class="a" style="left:139px;top:282px;width:479px;height:16px;background:#dcdfe4"></div>
<div class="a" style="left:139px;top:298px;width:479px;height:1px;background:#b5bfc6"></div>
<div class="a" style="left:211px;top:282px;width:1px;height:16px;background:#b5bfc6"></div>
<div class="a" style="left:276px;top:282px;width:1px;height:16px;background:#b5bfc6"></div>
<div class="a" style="left:428px;top:282px;width:1px;height:16px;background:#b5bfc6"></div>
<div class="a" style="left:527px;top:282px;width:1px;height:16px;background:#b5bfc6"></div>
<div class="a" style="left:598px;top:282px;width:1px;height:16px;background:#b5bfc6"></div>
<div class="a" style="left:617px;top:282px;width:1px;height:16px;background:#b5bfc6"></div>
<div class="t" style="left:212.90px;top:284px;font-size:11px;transform:scaleX(0.9357);transform-origin:0 0;">AAPL</div>
<div class="t" style="left:278.00px;top:284px;font-size:11px;transform:scaleX(0.8689);transform-origin:0 0;">APPLE INC.</div>
<div class="t" style="left:430.20px;top:284px;font-size:11px;letter-spacing:-0.123px;">Actions NASDAQ</div>
<div class="t" style="left:565.80px;top:284px;font-size:11px;letter-spacing:-0.140px;">Action</div>
<div class="a" style="left:602px;top:285px;width:13px;height:12px;background:linear-gradient(#fdfdfd,#e4e4e4);border:1px solid #b9c1c7;border-radius:2px"></div>
<svg class="a" style="left:604px;top:287px;" width="9" height="8" viewBox="0 0 9 8"><path d="M2 1.6 L7 6.4 M7 1.6 L2 6.4" stroke="#c42020" stroke-width="3.4" stroke-linecap="round"/><path d="M2 1.6 L7 6.4 M7 1.6 L2 6.4" stroke="#f04040" stroke-width="2.4" stroke-linecap="round"/></svg>
<div class="a" style="left:139px;top:298px;width:479px;height:16px;background:#e2eff7"></div>
<div class="a" style="left:139px;top:314px;width:479px;height:1px;background:#b5bfc6"></div>
<div class="a" style="left:211px;top:298px;width:1px;height:16px;background:#b5bfc6"></div>
<div class="a" style="left:276px;top:298px;width:1px;height:16px;background:#b5bfc6"></div>
<div class="a" style="left:428px;top:298px;width:1px;height:16px;background:#b5bfc6"></div>
<div class="a" style="left:527px;top:298px;width:1px;height:16px;background:#b5bfc6"></div>
<div class="a" style="left:598px;top:298px;width:1px;height:16px;background:#b5bfc6"></div>
<div class="a" style="left:617px;top:298px;width:1px;height:16px;background:#b5bfc6"></div>
<div class="t" style="left:139.50px;top:300px;font-size:11px;transform:scaleX(0.8667);transform-origin:0 0;">CURRENCY</div>
<div class="t" style="left:212.90px;top:300px;font-size:11px;transform:scaleX(0.8468);transform-origin:0 0;">EURUSD</div>
<div class="t" style="left:278.00px;top:300px;font-size:11px;transform:scaleX(0.9067);transform-origin:0 0;">Spot EUR/USD</div>
<div class="t" style="left:430.20px;top:300px;font-size:11px;letter-spacing:-0.143px;">Forex 47 paires</div>
<div class="t" style="left:568.70px;top:300px;font-size:11px;transform:scaleX(0.9448);transform-origin:0 0;">Forex</div>
<div class="a" style="left:602px;top:301px;width:13px;height:12px;background:linear-gradient(#fdfdfd,#e4e4e4);border:1px solid #b9c1c7;border-radius:2px"></div>
<svg class="a" style="left:604px;top:303px;" width="9" height="8" viewBox="0 0 9 8"><path d="M2 1.6 L7 6.4 M7 1.6 L2 6.4" stroke="#c42020" stroke-width="3.4" stroke-linecap="round"/><path d="M2 1.6 L7 6.4 M7 1.6 L2 6.4" stroke="#f04040" stroke-width="2.4" stroke-linecap="round"/></svg>
<div class="a" style="left:139px;top:314px;width:479px;height:16px;background:#dcdfe4"></div>
<div class="a" style="left:139px;top:330px;width:479px;height:1px;background:#b5bfc6"></div>
<div class="a" style="left:211px;top:314px;width:1px;height:16px;background:#b5bfc6"></div>
<div class="a" style="left:276px;top:314px;width:1px;height:16px;background:#b5bfc6"></div>
<div class="a" style="left:428px;top:314px;width:1px;height:16px;background:#b5bfc6"></div>
<div class="a" style="left:527px;top:314px;width:1px;height:16px;background:#b5bfc6"></div>
<div class="a" style="left:598px;top:314px;width:1px;height:16px;background:#b5bfc6"></div>
<div class="a" style="left:617px;top:314px;width:1px;height:16px;background:#b5bfc6"></div>
<div class="t" style="left:139.50px;top:316px;font-size:11px;transform:scaleX(0.9415);transform-origin:0 0;">DAXXXXX</div>
<div class="t" style="left:212.90px;top:316px;font-size:11px;transform:scaleX(0.9415);transform-origin:0 0;">DAXXXXX</div>
<div class="t" style="left:278.00px;top:316px;font-size:11px;letter-spacing:-0.230px;">DAX30 Full0615 Future</div>
<div class="t" style="left:430.20px;top:316px;font-size:11px;transform:scaleX(0.9076);transform-origin:0 0;">Futures EUREX</div>
<div class="t" style="left:565.30px;top:316px;font-size:11px;letter-spacing:-0.240px;">Future</div>
<div class="a" style="left:602px;top:317px;width:13px;height:12px;background:linear-gradient(#fdfdfd,#e4e4e4);border:1px solid #b9c1c7;border-radius:2px"></div>
<svg class="a" style="left:604px;top:319px;" width="9" height="8" viewBox="0 0 9 8"><path d="M2 1.6 L7 6.4 M7 1.6 L2 6.4" stroke="#c42020" stroke-width="3.4" stroke-linecap="round"/><path d="M2 1.6 L7 6.4 M7 1.6 L2 6.4" stroke="#f04040" stroke-width="2.4" stroke-linecap="round"/></svg>
<div class="a" style="left:139px;top:330px;width:479px;height:16px;background:#e2eff7"></div>
<div class="a" style="left:139px;top:346px;width:479px;height:1px;background:#b5bfc6"></div>
<div class="a" style="left:211px;top:330px;width:1px;height:16px;background:#b5bfc6"></div>
<div class="a" style="left:276px;top:330px;width:1px;height:16px;background:#b5bfc6"></div>
<div class="a" style="left:428px;top:330px;width:1px;height:16px;background:#b5bfc6"></div>
<div class="a" style="left:527px;top:330px;width:1px;height:16px;background:#b5bfc6"></div>
<div class="a" style="left:598px;top:330px;width:1px;height:16px;background:#b5bfc6"></div>
<div class="a" style="left:617px;top:330px;width:1px;height:16px;background:#b5bfc6"></div>
<div class="t" style="left:139.50px;top:332px;font-size:11px;transform:scaleX(0.8667);transform-origin:0 0;">CURRENCY</div>
<div class="t" style="left:212.90px;top:332px;font-size:11px;transform:scaleX(0.8809);transform-origin:0 0;">GBPUSD</div>
<div class="t" style="left:278.00px;top:332px;font-size:11px;transform:scaleX(0.9200);transform-origin:0 0;">Spot GBP/USD</div>
<div class="t" style="left:430.20px;top:332px;font-size:11px;letter-spacing:-0.143px;">Forex 47 paires</div>
<div class="t" style="left:568.70px;top:332px;font-size:11px;transform:scaleX(0.9448);transform-origin:0 0;">Forex</div>
<div class="a" style="left:602px;top:333px;width:13px;height:12px;background:linear-gradient(#fdfdfd,#e4e4e4);border:1px solid #b9c1c7;border-radius:2px"></div>
<svg class="a" style="left:604px;top:335px;" width="9" height="8" viewBox="0 0 9 8"><path d="M2 1.6 L7 6.4 M7 1.6 L2 6.4" stroke="#c42020" stroke-width="3.4" stroke-linecap="round"/><path d="M2 1.6 L7 6.4 M7 1.6 L2 6.4" stroke="#f04040" stroke-width="2.4" stroke-linecap="round"/></svg>
<div class="a" style="left:139px;top:346px;width:479px;height:16px;background:#dcdfe4"></div>
<div class="a" style="left:139px;top:362px;width:479px;height:1px;background:#b5bfc6"></div>
<div class="a" style="left:211px;top:346px;width:1px;height:16px;background:#b5bfc6"></div>
<div class="a" style="left:276px;top:346px;width:1px;height:16px;background:#b5bfc6"></div>
<div class="a" style="left:428px;top:346px;width:1px;height:16px;background:#b5bfc6"></div>
<div class="a" style="left:527px;top:346px;width:1px;height:16px;background:#b5bfc6"></div>
<div class="a" style="left:598px;top:346px;width:1px;height:16px;background:#b5bfc6"></div>
<div class="a" style="left:617px;top:346px;width:1px;height:16px;background:#b5bfc6"></div>
<div class="t" style="left:139.50px;top:348px;font-size:11px;transform:scaleX(0.8885);transform-origin:0 0;">FCEXXXX</div>
<div class="t" style="left:212.90px;top:348px;font-size:11px;transform:scaleX(0.8885);transform-origin:0 0;">FCEXXXX</div>
<div class="t" style="left:278.00px;top:348px;font-size:11px;transform:scaleX(0.9390);transform-origin:0 0;">CAC40 FCE Full0615 Future</div>
<div class="t" style="left:430.20px;top:348px;font-size:11px;transform:scaleX(0.9170);transform-origin:0 0;">Futures LIFFE FR</div>
<div class="t" style="left:565.30px;top:348px;font-size:11px;letter-spacing:-0.240px;">Future</div>
<div class="a" style="left:602px;top:349px;width:13px;height:12px;background:linear-gradient(#fdfdfd,#e4e4e4);border:1px solid #b9c1c7;border-radius:2px"></div>
<svg class="a" style="left:604px;top:351px;" width="9" height="8" viewBox="0 0 9 8"><path d="M2 1.6 L7 6.4 M7 1.6 L2 6.4" stroke="#c42020" stroke-width="3.4" stroke-linecap="round"/><path d="M2 1.6 L7 6.4 M7 1.6 L2 6.4" stroke="#f04040" stroke-width="2.4" stroke-linecap="round"/></svg>
<div class="a" style="left:139px;top:362px;width:479px;height:16px;background:#e2eff7"></div>
<div class="a" style="left:139px;top:378px;width:479px;height:1px;background:#b5bfc6"></div>
<div class="a" style="left:211px;top:362px;width:1px;height:16px;background:#b5bfc6"></div>
<div class="a" style="left:276px;top:362px;width:1px;height:16px;background:#b5bfc6"></div>
<div class="a" style="left:428px;top:362px;width:1px;height:16px;background:#b5bfc6"></div>
<div class="a" style="left:527px;top:362px;width:1px;height:16px;background:#b5bfc6"></div>
<div class="a" style="left:598px;top:362px;width:1px;height:16px;background:#b5bfc6"></div>
<div class="a" style="left:617px;top:362px;width:1px;height:16px;background:#b5bfc6"></div>
<div class="t" style="left:139.50px;top:364px;font-size:11px;transform:scaleX(0.8667);transform-origin:0 0;">CURRENCY</div>
<div class="t" style="left:212.90px;top:364px;font-size:11px;transform:scaleX(0.8761);transform-origin:0 0;">EURGBP</div>
<div class="t" style="left:278.00px;top:364px;font-size:11px;transform:scaleX(0.9067);transform-origin:0 0;">Spot EUR/GBP</div>
<div class="t" style="left:430.20px;top:364px;font-size:11px;letter-spacing:-0.143px;">Forex 47 paires</div>
<div class="t" style="left:568.70px;top:364px;font-size:11px;transform:scaleX(0.9448);transform-origin:0 0;">Forex</div>
<div class="a" style="left:602px;top:365px;width:13px;height:12px;background:linear-gradient(#fdfdfd,#e4e4e4);border:1px solid #b9c1c7;border-radius:2px"></div>
<svg class="a" style="left:604px;top:367px;" width="9" height="8" viewBox="0 0 9 8"><path d="M2 1.6 L7 6.4 M7 1.6 L2 6.4" stroke="#c42020" stroke-width="3.4" stroke-linecap="round"/><path d="M2 1.6 L7 6.4 M7 1.6 L2 6.4" stroke="#f04040" stroke-width="2.4" stroke-linecap="round"/></svg>
<div class="a" style="left:282px;top:389px;width:192px;height:24px;background:linear-gradient(#fdfdfd 0,#f5f5f5 56%,#dcdcdc 57%,#e4e4e4 100%);border:1px solid #b9c2c8;border-radius:3px"></div>
<div class="t" style="left:298.50px;top:395px;font-size:11px;letter-spacing:-0.073px;color:#a0a0a0">Supprimer valeurs sélectionnées</div>
<svg class="a" style="left:0;top:0" width="640" height="438" viewBox="0 0 640 438">
<defs><linearGradient id="yg" x1="0" y1="0" x2="0" y2="1"><stop offset="0" stop-color="#ffe45a"/><stop offset="1" stop-color="#f7cf00"/></linearGradient></defs>
<rect x="188" y="3" width="25" height="26" rx="2.5" fill="none" stroke="#f0c400" stroke-width="6.2"/>
<rect x="188" y="3" width="25" height="26" rx="2.5" fill="none" stroke="#ffd800" stroke-width="5"/>
<rect x="186.6" y="1.6" width="27.8" height="28.8" rx="3.5" fill="none" stroke="#ffe458" stroke-width="2"/>
<path d="M200.3 31 C200.3 80 184 104.5 113 105.5" fill="none" stroke="#ecc200" stroke-width="6.4"/>
<path d="M200.3 31 C200.3 80 184 104.5 113 105.5" fill="none" stroke="#ffd900" stroke-width="5"/>
<path d="M200.3 31 C200.3 80 184 104.5 113 105.5" fill="none" stroke="#fff2a0" stroke-width="1.6"/>
<path d="M100.5 106 L114.5 96.5 Q111.5 105.5 115.5 114.5 Z" fill="#ffd900" stroke="#ecc200" stroke-width="1" stroke-linejoin="round"/><path d="M104 106 L112 101 Q111 105.5 112.5 110 Z" fill="#ffe14a"/>
</svg>
</body></html>
